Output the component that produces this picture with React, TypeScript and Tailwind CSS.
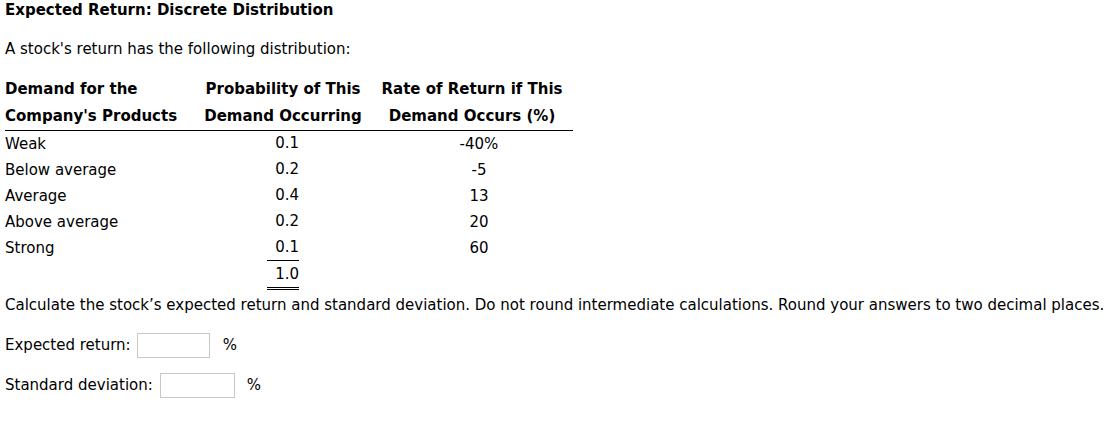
import React from 'react';

const rows = [
  { demand: 'Weak', prob: '0.1', ret: '-40%' },
  { demand: 'Below average', prob: '0.2', ret: '-5' },
  { demand: 'Average', prob: '0.4', ret: '13' },
  { demand: 'Above average', prob: '0.2', ret: '20' },
  { demand: 'Strong', prob: '0.1', ret: '60' },
];

export default function App() {
  return (
    <div className="min-h-screen bg-white px-[5px] pt-[1px] text-[15px] text-black" style={{ fontFamily: '"DejaVu Sans", Verdana, sans-serif' }}>
      <div className="font-bold leading-[18px]">Expected Return: Discrete Distribution</div>

      <p className="mt-[21px] leading-[18px]">A stock's return has the following distribution:</p>

      <div className="mt-[18px] grid w-[568px] grid-cols-[190px_176px_202px]">
        <div className="border-b border-black font-bold leading-[27px]">
          Demand for the
          <br />
          Company's Products
        </div>
        <div className="border-b border-black text-center font-bold leading-[27px]">
          Probability of This
          <br />
          Demand Occurring
        </div>
        <div className="border-b border-black text-center font-bold leading-[27px]">
          Rate of Return if This
          <br />
          Demand Occurs (%)
        </div>

        {rows.map((r, i) => (
          <React.Fragment key={r.demand}>
            <div className="h-[26px] leading-[26px]">{r.demand}</div>
            <div className="flex h-[26px] justify-center">
              <span className={'w-[32px] text-right leading-[25px] ' + (i === rows.length - 1 ? 'border-b border-black' : '')}>
                {r.prob}
              </span>
            </div>
            <div className="h-[26px] pl-[14px] text-center leading-[26px]">{r.ret}</div>
          </React.Fragment>
        ))}

        <div />
        <div className="flex justify-center">
          <span className="w-[32px] border-b-[3px] border-double border-black text-right leading-[26px]">1.0</span>
        </div>
        <div />
      </div>

      <p className="mt-[6px] leading-[18px]">
        Calculate the stock’s expected return and standard deviation. Do not round intermediate calculations. Round your answers to two decimal places.
      </p>

      <div className="mt-[19px] flex h-[25px] items-center">
        <span>Expected return:</span>
        <input type="text" className="ml-[6px] h-[25px] w-[73px] border border-[#c8c8c8] bg-white outline-none" />
        <span className="ml-[13px]">%</span>
      </div>

      <div className="mt-[15px] flex h-[25px] items-center">
        <span>Standard deviation:</span>
        <input type="text" className="ml-[7px] h-[25px] w-[75px] border border-[#c8c8c8] bg-white outline-none" />
        <span className="ml-[12px]">%</span>
      </div>
    </div>
  );
}
